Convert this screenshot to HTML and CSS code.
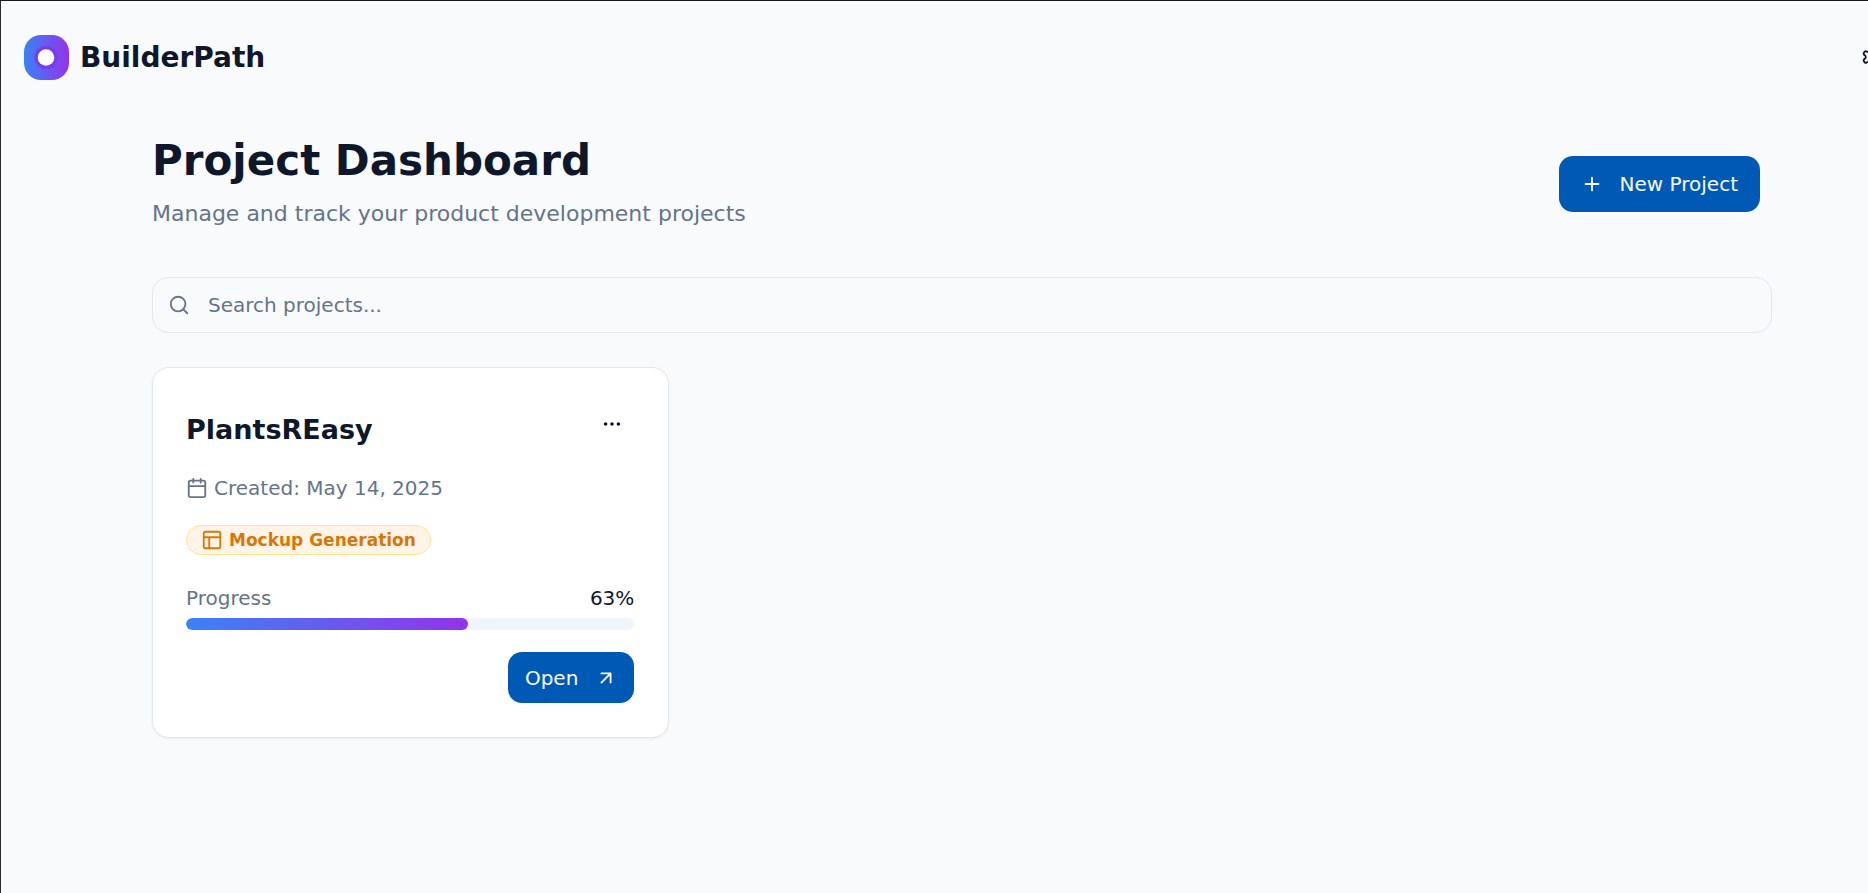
FILE: index.html
```html
<!DOCTYPE html>
<html lang="en">
<head>
<meta charset="utf-8">
<meta name="viewport" content="width=device-width, initial-scale=1">
<title>BuilderPath</title>
<link rel="stylesheet" href="styles.css">
</head>
<body>
<div class="app">
  <header class="topbar">
    <a class="brand" href="#">
      <svg class="brand-mark" viewBox="0 0 45 45" aria-hidden="true">
        <defs><linearGradient id="mark"><stop offset="0" stop-color="#3b82f6"/><stop offset="1" stop-color="#9333ea"/></linearGradient></defs>
        <rect width="45" height="45" rx="17" fill="url(#mark)"/>
        <circle cx="22" cy="22.5" r="11.5" fill="#7c3aed"/>
        <circle cx="22" cy="22.5" r="8.3" fill="#fff"/>
      </svg>
      <span class="brand-name">BuilderPath</span>
    </a>
    <button class="icon-button" type="button" aria-label="Settings">
      <svg class="icon icon-dark" viewBox="0 0 24 24" aria-hidden="true"><path d="M12.22 2h-.44a2 2 0 0 0-2 2v.18a2 2 0 0 1-1 1.73l-.43.25a2 2 0 0 1-2 0l-.15-.08a2 2 0 0 0-2.73.73l-.22.38a2 2 0 0 0 .73 2.73l.15.1a2 2 0 0 1 1 1.72v.51a2 2 0 0 1-1 1.74l-.15.09a2 2 0 0 0-.73 2.73l.22.38a2 2 0 0 0 2.73.73l.15-.08a2 2 0 0 1 2 0l.43.25a2 2 0 0 1 1 1.73V20a2 2 0 0 0 2 2h.44a2 2 0 0 0 2-2v-.18a2 2 0 0 1 1-1.73l.43-.25a2 2 0 0 1 2 0l.15.08a2 2 0 0 0 2.73-.73l.22-.39a2 2 0 0 0-.73-2.73l-.15-.08a2 2 0 0 1-1-1.74v-.5a2 2 0 0 1 1-1.74l.15-.09a2 2 0 0 0 .73-2.73l-.22-.38a2 2 0 0 0-2.73-.73l-.15.08a2 2 0 0 1-2 0l-.43-.25a2 2 0 0 1-1-1.73V4a2 2 0 0 0-2-2z"/><circle cx="12" cy="12" r="3"/></svg>
    </button>
  </header>

  <main class="content">
    <section class="page-head">
      <div>
        <h1 class="page-title">Project Dashboard</h1>
        <p class="page-subtitle">Manage and track your product development projects</p>
      </div>
      <button class="button button-new" type="button">
        <svg class="icon" viewBox="0 0 24 24" aria-hidden="true"><path d="M5 12h14M12 5v14"/></svg>
        New Project
      </button>
    </section>

    <label class="search">
      <svg class="icon" viewBox="0 0 24 24" aria-hidden="true"><circle cx="11" cy="11" r="8"/><path d="m21 21-4.3-4.3"/></svg>
      <input class="search-input" type="text" placeholder="Search projects..." aria-label="Search projects">
    </label>

    <section class="projects">
      <article class="card">
        <div class="card-head">
          <h2 class="card-title">PlantsREasy</h2>
          <button class="icon-button" type="button" aria-label="Project menu">
            <svg class="icon icon-dark" viewBox="0 0 24 24" aria-hidden="true"><circle cx="12" cy="12" r="1"/><circle cx="19" cy="12" r="1"/><circle cx="5" cy="12" r="1"/></svg>
          </button>
        </div>
        <p class="created">
          <svg class="icon" viewBox="0 0 24 24" aria-hidden="true"><path d="M8 2v4M16 2v4M3 10h18"/><rect x="3" y="4" width="18" height="18" rx="2"/></svg>
          Created: May 14, 2025
        </p>
        <span class="badge">
          <svg class="icon" viewBox="0 0 24 24" aria-hidden="true"><rect x="3" y="3" width="18" height="18" rx="2"/><path d="M3 9h18M9 21V9"/></svg>
          Mockup Generation
        </span>
        <div class="progress-label">
          <span id="progress-name">Progress</span>
          <span class="progress-value">63%</span>
        </div>
        <div class="track" role="progressbar" aria-labelledby="progress-name" aria-valuenow="63" aria-valuemin="0" aria-valuemax="100">
          <div class="fill" style="width:63%"></div>
        </div>
        <button class="button button-open" type="button">
          Open
          <svg class="icon" viewBox="0 0 24 24" aria-hidden="true"><path d="M7 7h10v10M7 17 17 7"/></svg>
        </button>
      </article>
    </section>
  </main>
</div>
</body>
</html>
```

FILE: styles.css
```css
* {
  box-sizing: border-box;
}

body {
  margin: 0;
  background: #f9fafc;
  color: #0f172a;
  font: 20px/28px "DejaVu Sans", sans-serif;
}

h1, h2, p {
  margin: 0;
}

.app {
  min-height: 100vh;
  overflow: hidden;
  border-top: 1px solid #16161c;
  border-left: 1px solid #2a2a30;
}

.icon {
  width: 22px;
  height: 22px;
  flex: none;
  fill: none;
  stroke: currentColor;
  stroke-width: 2;
  stroke-linecap: round;
  stroke-linejoin: round;
}

/* The toolbar runs past the right edge of the window. */
.topbar {
  display: flex;
  align-items: center;
  justify-content: space-between;
  height: 112px;
  margin-right: -26px;
  padding-left: 23px;
}

.brand {
  display: flex;
  align-items: center;
  gap: 11px;
  color: inherit;
  text-decoration: none;
}

.brand-mark {
  width: 45px;
  height: 45px;
}

.brand-name {
  padding-top: 2px;
  font-size: 28px;
  font-weight: 700;
}

.icon-button {
  display: grid;
  place-items: center;
  width: 45px;
  height: 45px;
  padding: 0;
  border: 0;
  background: none;
  color: #0f172a;
}

.content {
  padding: 23px 96px 48px 151px;
}

.page-head {
  display: flex;
  align-items: center;
  justify-content: space-between;
  padding-right: 12px;
}

.page-title {
  font-size: 42px;
  line-height: 50px;
}

.page-subtitle {
  margin-top: 11px;
  color: #64748b;
  font-size: 22px;
  line-height: 34px;
}

.button {
  display: flex;
  align-items: center;
  border: 0;
  border-radius: 14px;
  background: #005ab5;
  color: #f8fafc;
  font: inherit;
}

.button-new {
  height: 56px;
  gap: 17px;
  padding: 0 22px;
}

.search {
  display: flex;
  align-items: center;
  gap: 18px;
  height: 56px;
  margin-top: 46px;
  padding: 0 15px;
  border: 1px solid #e2e8f0;
  border-radius: 16px;
  color: #64748b;
}

.search-input {
  flex: 1;
  min-width: 0;
  padding: 0;
  border: 0;
  outline: 0;
  background: none;
  color: #0f172a;
  font: inherit;
}

.search-input::placeholder {
  color: #64748b;
  opacity: 1;
}

.projects {
  display: grid;
  grid-template-columns: repeat(3, 1fr);
  gap: 34px;
  margin-top: 34px;
}

.card {
  display: flex;
  flex-direction: column;
  align-items: flex-start;
  padding: 33px 34px 34px 33px;
  border: 1px solid #e2e8f0;
  border-radius: 17px;
  background: #fff;
  box-shadow: 0 1px 3px rgb(15 23 42 / 6%);
}

.card-head {
  display: flex;
  align-items: flex-start;
  justify-content: space-between;
  align-self: stretch;
}

.card-title {
  margin-top: 9px;
  font-size: 27px;
  line-height: 40px;
}

.created {
  display: flex;
  align-items: center;
  gap: 6px;
  margin-top: 24px;
  color: #64748b;
}

.badge {
  display: flex;
  align-items: center;
  gap: 6px;
  height: 30px;
  margin-top: 23px;
  padding: 0 14px;
  border: 1px solid #fde68a;
  border-radius: 15px;
  background: #fff4e6;
  color: #d97706;
  font-size: 17px;
  font-weight: 700;
}

.progress-label {
  display: flex;
  justify-content: space-between;
  align-self: stretch;
  margin-top: 29px;
  color: #64748b;
}

.progress-value {
  color: #0f172a;
}

.track {
  align-self: stretch;
  height: 12px;
  margin-top: 6px;
  overflow: hidden;
  border-radius: 6px;
  background: #f1f5f9;
}

.fill {
  height: 100%;
  border-radius: 6px;
  background: linear-gradient(90deg, #3b82f6, #9333ea);
}

.button-open {
  height: 51px;
  align-self: flex-end;
  gap: 17px;
  margin-top: 22px;
  padding: 0 17px;
}
```
